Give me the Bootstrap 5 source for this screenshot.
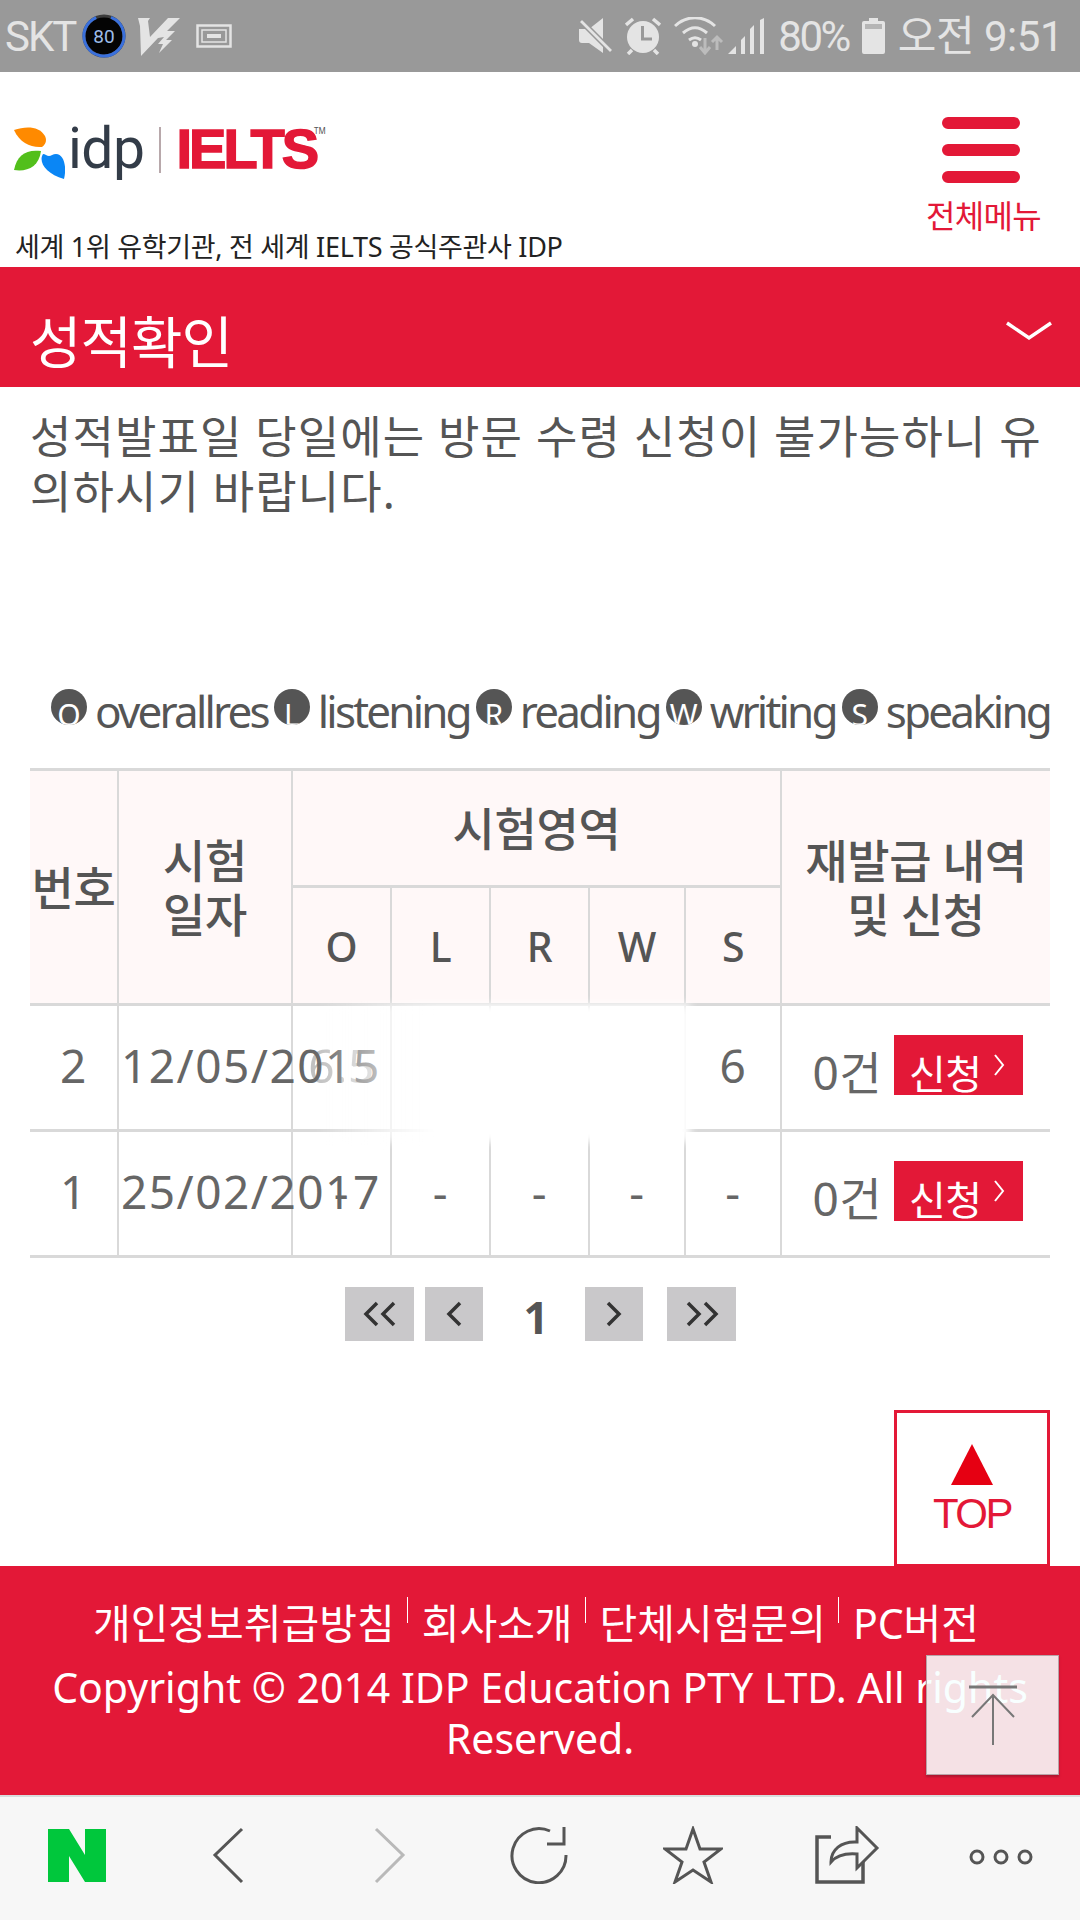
<!DOCTYPE html>
<html lang="ko">

<head>
    <meta charset="UTF-8">
    <title>성적확인</title>
    <link href="https://cdn.jsdelivr.net/npm/bootstrap@5.3.0/dist/css/bootstrap.min.css" rel="stylesheet">

    <style>
        body {
            width: 1080px;
            height: 1920px;
            overflow: hidden;
            position: relative;
            background: #fff;
            font-family: "Noto Sans", "Noto Sans CJK KR", sans-serif;
            color: #555;
        }

        .status-bar {
            height: 72px;
            background: #999;
            color: #e4e4e4;
            font-family: Roboto, "Noto Sans CJK KR", sans-serif;
            font-size: 42px;
            padding: 0 17px 0 5px;
        }

        .status-left {
            gap: 12px;
        }

        .status-right {
            gap: 13px;
        }

        .st-carrier {
            letter-spacing: -2px;
            margin-right: -5px;
        }

        .st-signal {
            margin-left: -9px;
        }

        .st-pct {
            letter-spacing: -2.5px;
        }

        .st-clock {
            letter-spacing: -.5px;
        }

        .top-head {
            height: 195px;
            position: relative;
        }

        .logo-row {
            padding: 51px 0 0 14px;
            height: 160px;
        }

        .logo-leaf {
            margin-top: 4px;
        }

        .logo-idp {
            font-family: Roboto, sans-serif;
            font-size: 57px;
            line-height: 52px;
            color: #333c48;
            letter-spacing: -.5px;
            margin-left: 3px;
        }

        .logo-sep {
            width: 2px;
            height: 46px;
            background: #b8a8ab;
            margin: 4px 16px 0 14px;
        }

        .logo-ielts {
            font-family: "Liberation Sans", sans-serif;
            font-weight: 700;
            font-size: 56px;
            line-height: 52px;
            color: #e31837;
            letter-spacing: -3px;
            -webkit-text-stroke: 1.5px #e31837;
        }

        .logo-tm {
            font-size: 8px;
            color: #555;
            line-height: 16px;
            margin-left: -2px;
        }

        .tagline {
            position: absolute;
            left: 15px;
            top: 158px;
            font-size: 27px;
            line-height: 34px;
            letter-spacing: -.3px;
            color: #222;
            white-space: nowrap;
        }

        .menu-btn {
            position: absolute;
            left: 926px;
            top: 45px;
            width: 116px;
            color: #e31837;
            font-size: 32px;
            line-height: 40px;
            letter-spacing: -.7px;
            white-space: nowrap;
        }

        .menu-bar {
            display: block;
            width: 78px;
            height: 12px;
            border-radius: 6px;
            background: #e31837;
            margin: 0 0 15px 16px;
        }

        .menu-bar:nth-child(3) {
            margin-bottom: 13px;
        }

        .title-bar {
            height: 120px;
            background: #e31837;
            color: #fff;
            padding: 0 28px 0 30px;
            font-size: 56px;
            letter-spacing: -1px;
        }

        .title-text {
            padding-top: 28px;
        }

        .title-arrow {
            margin-top: 8px;
        }

        .notice-text {
            padding: 22px 30px 0;
            height: 290px;
            font-size: 45px;
            line-height: 55px;
            color: #555;
            letter-spacing: 1.1px;
            white-space: nowrap;
        }

        .legend-row {
            height: 91px;
            padding: 0 0 24px 51px;
            white-space: nowrap;
            font-size: 44px;
            letter-spacing: -2.8px;
            line-height: 52px;
            color: #555;
        }

        .legend-dot {
            width: 36px;
            height: 36px;
            border-radius: 50%;
            background: #555;
            color: #fff;
            font-size: 30px;
            letter-spacing: 0;
            line-height: 30px;
            overflow: hidden;
            text-align: center;
            padding-top: 11px;
            flex: none;
            margin-top: -8px;
        }

        .legend-word {
            margin: 0 6px 0 8px;
        }

        .table-wrap {
            margin: 0 30px;
            width: 1020px;
            position: relative;
        }

        .score-table {
            width: 1020px;
            table-layout: fixed;
            border-collapse: collapse;
            margin: 0;
            color: #666;
        }

        .score-table th,
        .score-table td {
            border: 2px solid #d9d9d9;
            border-width: 3px 2px;
            padding: 0;
            text-align: center;
            vertical-align: middle;
            white-space: nowrap;
        }

        .score-table tr > :first-child {
            border-left: 0;
        }

        .score-table tr > :last-child {
            border-right: 0;
        }

        .score-table th {
            background: #fff8f8;
            font-size: 46px;
            line-height: 54px;
            font-weight: 500;
            color: #555;
            letter-spacing: -.3px;
        }

        .score-table td {
            font-size: 46px;
            height: 126px;
            padding-bottom: 4px;
            letter-spacing: .5px;
        }

        .col-no {
            width: 88px;
        }

        .col-date {
            width: 174px;
        }

        .col-wide {
            width: 99px;
        }

        .col-narrow {
            width: 96px;
        }

        .col-apply {
            width: 269px;
        }

        .head-top {
            height: 117px;
        }

        .score-table .head-latin {
            height: 118px;
            font-size: 41px;
            padding-top: 0;
        }

        .score-table .date-cell {
            text-align: left;
            overflow: visible;
            padding-left: 2px;
            letter-spacing: 1.5px;
        }

        .ghost-score {
            opacity: .4;
        }

        .score-table .apply-cell {
            text-align: right;
            padding-right: 27px;
        }

        .count-text {
            position: relative;
            top: 3px;
        }

        .apply-btn {
            display: inline-block;
            width: 129px;
            height: 60px;
            background: #e31837;
            color: #fff;
            font-size: 40px;
            line-height: 78px;
            overflow: hidden;
            text-align: left;
            text-decoration: none;
            padding-left: 15px;
            margin-left: 12px;
            letter-spacing: -.5px;
            position: relative;
            top: 8px;
        }

        .apply-btn svg {
            position: absolute;
            right: 18px;
            top: 18px;
        }

        .smudge {
            position: absolute;
            left: 285px;
            top: 236px;
            width: 375px;
            height: 138px;
            background: linear-gradient(90deg, rgba(255, 255, 255, 0), rgba(255, 255, 255, .75) 22%, #fff 32%);
            filter: blur(4px);
            pointer-events: none;
        }

        .pager-row {
            height: 54px;
            margin-top: 29px;
            padding-left: 345px;
        }

        .pager-btn {
            height: 54px;
            background: #c9c8ca;
            flex: none;
        }

        .pager-double {
            width: 69px;
        }

        .pager-single {
            width: 58px;
            margin-left: 11px;
        }

        .pager-next {
            margin-left: 0;
        }

        .pager-last {
            margin-left: 24px;
        }

        .pager-num {
            width: 102px;
            padding-left: 4px;
            font-size: 44px;
            font-weight: 700;
            line-height: 60px;
            color: #555;
            text-align: center;
            flex: none;
        }

        .top-row {
            height: 156px;
            margin-top: 69px;
            padding-right: 30px;
        }

        .top-btn {
            width: 156px;
            height: 156px;
            border: 3px solid #e31837;
            border-bottom-width: 2px;
            background: #fff;
            padding-top: 31px;
        }

        .top-label {
            font-family: "Liberation Sans", sans-serif;
            font-size: 42px;
            line-height: 44px;
            letter-spacing: -2.5px;
            color: #e31837;
            margin-top: 7px;
        }

        .site-footer {
            height: 229px;
            background: #e31837;
            color: #fff;
            text-align: center;
            padding-top: 31px;
        }

        .foot-links {
            font-size: 41px;
            line-height: 50px;
            height: 65px;
            padding-right: 8px;
            white-space: nowrap;
        }

        .foot-sep {
            display: inline-block;
            width: 1px;
            height: 26px;
            background: #fff;
            margin: 0 14px 0 12px;
            vertical-align: 16px;
        }

        .foot-copy {
            font-size: 41px;
            line-height: 51px;
            padding: 0 40px;
        }

        .bottom-bar {
            height: 126px;
            background: #f7f7f7;
            border-top: 2px solid #d8dcdc;
            padding-bottom: 8px;
        }

        .nav-slot {
            width: 154px;
            flex: none;
        }

        .nav-back {
            margin-right: 6px;
        }

        .nav-fwd {
            margin-left: 10px;
        }

        .nav-dots {
            margin-top: 4px;
        }

        .float-up {
            position: absolute;
            left: 926px;
            top: 1655px;
            width: 133px;
            height: 120px;
            background: rgba(247, 255, 255, .87);
            border: 1px solid #b9a3a8;
            box-shadow: 0 2px 2px rgba(120, 20, 40, .5);
        }
    </style>
</head>

<body>
    <!-- 상단 상태바 -->
    <div class="status-bar d-flex align-items-center justify-content-between">
        <div class="status-left d-flex align-items-center">
            <span class="st-carrier">SKT</span>
            <svg width="44" height="44" viewBox="0 0 44 44">
                <circle cx="22" cy="22" r="20" fill="#040404" stroke="#3c3c3c" stroke-width="3" />
                <path d="M29 3.300A20 20 0 1 1 22 2" fill="none" stroke="#3a70dc" stroke-width="3"
                    stroke-dasharray="110 200" />
                <text x="22" y="29" text-anchor="middle" font-size="19" fill="#9dbce8"
                    font-family="Roboto, sans-serif">80</text>
            </svg>
            <svg width="42" height="40" viewBox="0 0 42 40" fill="#e4e4e4">
                <path d="M0 2h12l-2 3 2 16L30 2h12L29 15h8l-9 9h6L21 37l4-9h-5l6-7-6 1L3 40 2 10z" />
            </svg>
            <svg class="ms-1" width="36" height="24" viewBox="0 0 36 24" fill="none" stroke="#e4e4e4" stroke-width="2.500">
                <rect x="1.500" y="1.500" width="33" height="21" />
                <rect x="6" y="6" width="24" height="12" stroke-width="1.500" />
                <rect x="11" y="10" width="14" height="4" fill="#e4e4e4" stroke="none" />
            </svg>
        </div>
        <div class="status-right d-flex align-items-center">
            <svg width="33" height="36" viewBox="0 0 33 36" fill="#e4e4e4">
                <path d="M0 11h10L24 0v35L10 25H3q-3 0-3-3z" />
                <path d="M0 4L3 1l31 31-3 3z" stroke="#999" stroke-width="1.500" />
            </svg>
            <svg width="36" height="38" viewBox="0 0 36 38">
                <circle cx="18" cy="20" r="16" fill="#e4e4e4" />
                <path d="M17.500 9v13H27" fill="none" stroke="#999" stroke-width="3" />
                <path d="M1 8l7-6M35 8l-7-6M7 33l-4 4M29 33l4 4" stroke="#e4e4e4" stroke-width="3.500" />
            </svg>
            <svg width="50" height="38" viewBox="0 0 50 38" fill="none" stroke="#e4e4e4" stroke-width="3">
                <path d="M1 9c12-11 28-11 40 0M9 16c8-7 16-7 24 0M15 23c4-3 8-3 12 0" />
                <circle cx="21" cy="27" r="3" fill="#e4e4e4" stroke="none" />
                <path d="M31 21v15M26 30l5 6 5-6" stroke-width="3" stroke="#bcbcbc" />
                <path d="M43 33V20M38 25l5-5 5 5" stroke-width="3" stroke="#bcbcbc" />
            </svg>
            <svg class="st-signal" width="37" height="36" viewBox="0 0 37 36" fill="#e4e4e4">
                <path d="M0 36l8-8v8zM13 36V22l4-4v18zM22 36V11l4-4v29zM32 36V2l4-2v36z" />
            </svg>
            <span class="st-pct">80%</span>
            <svg width="23" height="36" viewBox="0 0 23 36" fill="#e4e4e4">
                <path d="M7 0h9v3h5q2 0 2 2v29q0 2-2 2H2q-2 0-2-2V5q0-2 2-2h5z" />
                <rect x="3" y="6" width="17" height="5" fill="#b5b5b5" />
            </svg>
            <span class="st-clock">오전 9:51</span>
        </div>
    </div>

    <!-- 로고 영역 -->
    <header class="top-head">
        <div class="logo-row d-flex align-items-baseline">
            <svg class="logo-leaf align-self-start" width="51" height="52" viewBox="0 0 51 52">
                <path d="M0 3C12-1 25-1 31 9c2 4 1 8-3 11C17 21 6 16 0 3z" fill="#ff8a00" />
                <path d="M27 24C12 22 3 28 0 43c13 2 25-3 27-19z" fill="#52bf1b" />
                <path d="M29 27c-5 8 3 20 21 25 3-12 0-25-8-25-3 0-5 2-7 2-2 0-4-2-6-2z" fill="#0a86f5" />
            </svg>
            <span class="logo-idp">idp</span>
            <span class="logo-sep align-self-start"></span>
            <span class="logo-ielts">IELTS</span>
            <span class="logo-tm align-self-start">TM</span>
        </div>
        <div class="tagline">세계 1위 유학기관, 전 세계 IELTS 공식주관사 IDP</div>
        <div class="menu-btn">
            <span class="menu-bar"></span>
            <span class="menu-bar"></span>
            <span class="menu-bar"></span>
            전체메뉴
        </div>
    </header>

    <div class="title-bar d-flex align-items-center justify-content-between">
        <span class="title-text">성적확인</span>
        <svg class="title-arrow" width="46" height="20" viewBox="0 0 46 20" fill="none" stroke="#fff" stroke-width="3.500">
            <path d="M1 2l22 15L45 2" />
        </svg>
    </div>

    <div class="notice-text">성적발표일 당일에는 방문 수령 신청이 불가능하니 유<br>의하시기 바랍니다.</div>

    <div class="legend-row d-flex align-items-center">
        <span class="legend-dot">O</span><span class="legend-word">overallres</span>
        <span class="legend-dot">L</span><span class="legend-word">listening</span>
        <span class="legend-dot">R</span><span class="legend-word">reading</span>
        <span class="legend-dot">W</span><span class="legend-word">writing</span>
        <span class="legend-dot">S</span><span class="legend-word">speaking</span>
    </div>

    <div class="table-wrap">
        <table class="score-table">
            <colgroup>
                <col class="col-no">
                <col class="col-date">
                <col class="col-wide">
                <col class="col-wide">
                <col class="col-wide">
                <col class="col-narrow">
                <col class="col-narrow">
                <col class="col-apply">
            </colgroup>
            <thead>
                <tr>
                    <th rowspan="2">번호</th>
                    <th rowspan="2">시험<br>일자</th>
                    <th colspan="5" class="head-top">시험영역</th>
                    <th rowspan="2">재발급 내역<br>및 신청</th>
                </tr>
                <tr>
                    <th class="head-latin">O</th>
                    <th class="head-latin">L</th>
                    <th class="head-latin">R</th>
                    <th class="head-latin">W</th>
                    <th class="head-latin">S</th>
                </tr>
            </thead>
            <tbody>
                <tr>
                    <td>2</td>
                    <td class="date-cell">12/05/2015</td>
                    <td><span class="ghost-score">6.5</span></td>
                    <td></td>
                    <td></td>
                    <td></td>
                    <td>6</td>
                    <td class="apply-cell"><span class="count-text">0건</span><a class="apply-btn">신청
                            <svg width="12" height="24" viewBox="0 0 12 24" fill="none" stroke="#fff" stroke-width="2">
                                <path d="M2 2l8 10L2 22" />
                            </svg></a></td>
                </tr>
                <tr>
                    <td>1</td>
                    <td class="date-cell">25/02/2017</td>
                    <td>-</td>
                    <td>-</td>
                    <td>-</td>
                    <td>-</td>
                    <td>-</td>
                    <td class="apply-cell"><span class="count-text">0건</span><a class="apply-btn">신청
                            <svg width="12" height="24" viewBox="0 0 12 24" fill="none" stroke="#fff" stroke-width="2">
                                <path d="M2 2l8 10L2 22" />
                            </svg></a></td>
                </tr>
            </tbody>
        </table>
        <div class="smudge"></div>
    </div>

    <div class="pager-row d-flex">
        <span class="pager-btn pager-double d-flex align-items-center justify-content-center">
            <svg width="34" height="26" viewBox="0 0 34 26" fill="none" stroke="#333" stroke-width="3.500">
                <path d="M14 2L3 13l11 11M31 2L20 13l11 11" />
            </svg>
        </span>
        <span class="pager-btn pager-single d-flex align-items-center justify-content-center">
            <svg width="16" height="26" viewBox="0 0 16 26" fill="none" stroke="#333" stroke-width="3.500">
                <path d="M14 2L3 13l11 11" />
            </svg>
        </span>
        <span class="pager-num">1</span>
        <span class="pager-btn pager-single pager-next d-flex align-items-center justify-content-center">
            <svg width="16" height="26" viewBox="0 0 16 26" fill="none" stroke="#333" stroke-width="3.500">
                <path d="M2 2l11 11L2 24" />
            </svg>
        </span>
        <span class="pager-btn pager-double pager-last d-flex align-items-center justify-content-center">
            <svg width="34" height="26" viewBox="0 0 34 26" fill="none" stroke="#333" stroke-width="3.500">
                <path d="M3 2l11 11L3 24M20 2l11 11-11 11" />
            </svg>
        </span>
    </div>

    <div class="top-row d-flex justify-content-end">
        <div class="top-btn d-flex flex-column align-items-center">
            <svg width="42" height="41" viewBox="0 0 42 41">
                <path d="M21 0l21 41H0z" fill="#e60012" />
            </svg>
            <div class="top-label">TOP</div>
        </div>
    </div>

    <footer class="site-footer">
        <div class="foot-links">개인정보취급방침<span class="foot-sep"></span>회사소개<span class="foot-sep"></span>단체시험문의<span class="foot-sep"></span>PC버전</div>
        <div class="foot-copy">Copyright © 2014 IDP Education PTY LTD. All rights Reserved.</div>
    </footer>

    <nav class="bottom-bar d-flex align-items-center">
        <div class="nav-slot d-flex justify-content-center">
            <svg width="58" height="53" viewBox="0 0 58 53">
                <path d="M0 0h21l16 26V0h21v53H37L21 27v26H0z" fill="#00c73c" />
            </svg>
        </div>
        <div class="nav-slot d-flex justify-content-center">
            <svg class="nav-back" width="32" height="57" viewBox="0 0 32 57" fill="none" stroke="#555" stroke-width="3">
                <path d="M30 2L3 28l27 27" />
            </svg>
        </div>
        <div class="nav-slot d-flex justify-content-center">
            <svg class="nav-fwd" width="32" height="57" viewBox="0 0 32 57" fill="none" stroke="#b9b9b9" stroke-width="3">
                <path d="M2 2l27 26L2 55" />
            </svg>
        </div>
        <div class="nav-slot d-flex justify-content-center">
            <svg width="58" height="58" viewBox="0 0 58 58" fill="none" stroke="#555" stroke-width="3">
                <path d="M40 5A27 27 0 1 0 56 29" />
                <path d="M54 1v17H37" />
            </svg>
        </div>
        <div class="nav-slot d-flex justify-content-center">
            <svg width="60" height="58" viewBox="0 0 60 58" fill="none" stroke="#555" stroke-width="3">
                <path d="M30 3l7 20h21L41 36l7 20-18-12-18 12 7-20L2 23h21z" />
            </svg>
        </div>
        <div class="nav-slot d-flex justify-content-center">
            <svg width="66" height="58" viewBox="0 0 66 58" fill="none" stroke="#555" stroke-width="3.500">
                <path d="M17 11H3v45h46V36" />
                <path d="M17 36c0-12 10-21 26-20V2l20 20-20 20V28c-12-1-20 1-26 8z" stroke-width="3" />
            </svg>
        </div>
        <div class="nav-slot d-flex justify-content-center">
            <svg class="nav-dots" width="66" height="20" viewBox="0 0 66 20" fill="none" stroke="#555" stroke-width="3">
                <circle cx="9" cy="10" r="6" />
                <circle cx="33" cy="10" r="6" />
                <circle cx="57" cy="10" r="6" />
            </svg>
        </div>
    </nav>

    <div class="float-up d-flex align-items-center justify-content-center">
        <svg width="52" height="60" viewBox="0 0 52 60" fill="none" stroke="#777" stroke-width="2">
            <path d="M2 2h48" stroke-width="3" />
            <path d="M26 10v50M5 32L26 10l21 22" />
        </svg>
    </div>

    <script src="https://cdn.jsdelivr.net/npm/bootstrap@5.3.0/dist/js/bootstrap.bundle.min.js"></script>
</body>

</html>
